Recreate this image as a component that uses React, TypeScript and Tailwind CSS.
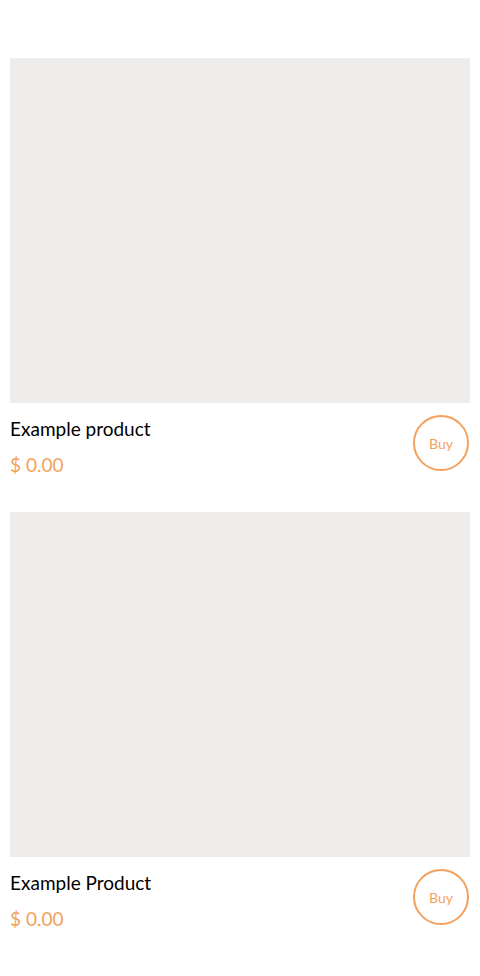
import React from 'react';

const products = [
  { name: 'Example product', price: '$ 0.00' },
  { name: 'Example Product', price: '$ 0.00' },
];

const ProductCard: React.FC<{ name: string; price: string }> = ({ name, price }) => (
  <div className="flex flex-col">
    <div className="h-[345px] w-full bg-[#edecea]" />
    <div className="flex items-start justify-between pt-[12px]">
      <div className="flex flex-col">
        <span className="text-[19px] leading-[28px] text-black">{name}</span>
        <span className="mt-[10px] text-[19px] leading-[24px] text-[#f4a15d]">{price}</span>
      </div>
      <button className="mr-px flex h-[56px] w-[56px] items-center justify-center rounded-full border-2 border-[#f4a15d] text-[14px] text-[#f4a15d]">
        Buy
      </button>
    </div>
  </div>
);

export default function App() {
  return (
    <div
      className="min-h-[976px] bg-white px-[10px] pt-[58px]"
      style={{ fontFamily: 'Lato, "Open Sans", sans-serif' }}
    >
      <div className="flex flex-col gap-[35px]">
        {products.map((p, i) => (
          <ProductCard key={i} name={p.name} price={p.price} />
        ))}
      </div>
    </div>
  );
}
